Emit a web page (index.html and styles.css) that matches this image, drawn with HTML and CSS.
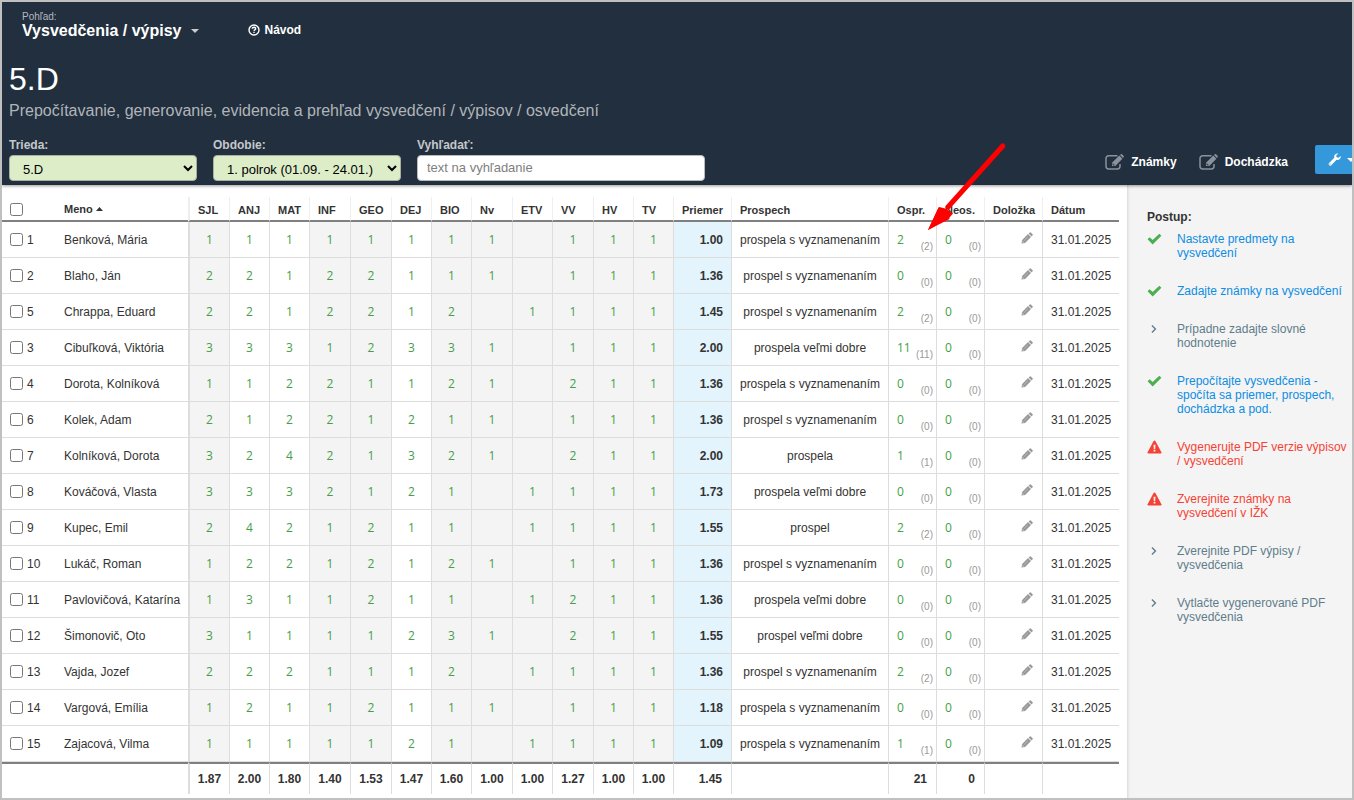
FILE: index.html
```html
<!DOCTYPE html>
<html lang="sk">
<head>
<meta charset="utf-8">
<title>Vysvedčenia / výpisy – 5.D</title>
<link rel="stylesheet" href="styles.css">
</head>
<body>
<svg class="sprite" aria-hidden="true">
  <symbol id="i-edit" viewBox="0 0 19 16">
    <path d="M12.500 1.700H3.700A2.700 2.700 0 0 0 1 4.400v7.900A2.700 2.700 0 0 0 3.700 15h8.600a2.700 2.700 0 0 0 2.700-2.700V10" fill="none" stroke="currentColor" stroke-width="1.500"/>
    <path d="M14.300 1.600l3.100 3.100-7.100 7.300H7V8.800zM15 .9l.9-.7q.6-.3 1.100.1l1.700 1.700q.4.500 0 1.100l-.7.900z" fill="currentColor"/>
    <path d="M8 9.400v1.600h1.600" fill="none" stroke="#222f3e" stroke-width=".8"/>
  </symbol>
  <symbol id="i-pencil" viewBox="0 0 12 12">
    <path d="M.5 11.500L1.100 7.900 7 2l3 3-5.900 5.900zM7.600 1.400L8.800.4q.5-.4 1 0L11.600 2.200q.5.500 0 1L10.600 4.400z" fill="currentColor"/>
    <path d="M1.500 9.400l1.100 1.100" stroke="#fff" stroke-width=".7"/>
    <path d="M3.200 8.400l3.600-3.600" stroke="#fff" stroke-width=".3"/>
  </symbol>
  <symbol id="i-check" viewBox="0 0 13 10">
    <path d="M.5 5.200L2.300 3.400 4.900 5.900 10.700.4 12.500 2.200 4.900 9.700z" fill="currentColor"/>
  </symbol>
  <symbol id="i-next" viewBox="0 0 13 10">
    <path d="M4.300 2L7.300 5 4.300 8" fill="none" stroke="currentColor" stroke-width="1.200"/>
  </symbol>
  <symbol id="i-warn" viewBox="0 0 15 13">
    <path d="M7.500 0q.6 0 .9.500l6 11.200q.4 1.200-.9 1.300h-12Q.2 12.900.6 11.700l6-11.200Q6.900 0 7.500 0z" fill="currentColor"/>
    <path d="M6.500 4.200h2l-.3 4.200H6.800zM6.600 9.300h1.800v1.800H6.600z" fill="#f4f4f4"/>
  </symbol>
</svg>
<div class="page">
  <header class="header">
    <nav class="topbar">
      <button class="view" type="button">
        <span class="view-label">Pohľad:</span>
        <span class="view-name">Vysvedčenia / výpisy <svg class="caret" viewBox="0 0 8 4"><path d="M0 0h8L4 4z" fill="currentColor"/></svg></span>
      </button>
      <a class="help" href="#"><svg viewBox="0 0 12 12"><circle cx="6" cy="6" r="5" fill="none" stroke="currentColor" stroke-width="1.400"/><path d="M4.200 4.700q.1-1.400 1.800-1.400 1.700.1 1.700 1.400 0 .8-.9 1.200-.7.300-.8 1" fill="none" stroke="currentColor" stroke-width="1.400"/><path d="M5.300 7.700h1.400V9H5.300z" fill="currentColor"/></svg>Návod</a>
    </nav>
    <h1 class="title">5.D</h1>
    <p class="subtitle">Prepočítavanie, generovanie, evidencia a prehľad vysvedčení / výpisov / osvedčení</p>
    <div class="toolbar">
      <div class="field field-select">
        <label for="trieda">Trieda:</label>
        <select id="trieda"><option>5.D</option></select>
      </div>
      <div class="field field-select">
        <label for="obdobie">Obdobie:</label>
        <select id="obdobie"><option>1. polrok (01.09. - 24.01.)</option></select>
      </div>
      <div class="field field-search">
        <label for="hladat">Vyhľadať:</label>
        <input id="hladat" type="text" placeholder="text na vyhľadanie">
      </div>
      <div class="actions">
        <a href="#"><svg><use href="#i-edit"/></svg>Známky</a>
        <a href="#"><svg><use href="#i-edit"/></svg>Dochádzka</a>
        <button class="tools" type="button" aria-label="Nástroje">
          <svg class="wrench" viewBox="0 0 13 13"><path d="M12.700 3.100q.3 1.700-.9 2.900-1.400 1.300-3.200.8L3.300 12.200q-1.100 1-2.200.1-1-1.100 0-2.200L6.300 4.800Q5.800 2.900 7.100 1.500 8.500.1 10.400.5L8.300 2.300l.2 2 2 .5zM2.200 10.500a.6.600 0 1 0 .1 1.100.6.600 0 0 0-.1-1.100z" fill="currentColor" fill-rule="evenodd"/></svg>
          <svg class="caret" viewBox="0 0 8 4"><path d="M0 0h8L4 4z" fill="currentColor"/></svg>
        </button>
      </div>
    </div>
  </header>
  <div class="body">
    <main class="content">
      <table class="grades">
        <colgroup>
          <col class="c-check"><col class="c-name"><col class="c-wide"><col span="2" class="c-grade"><col span="2" class="c-wide"><col span="2" class="c-grade"><col class="c-wide"><col class="c-grade"><col class="c-wide"><col span="2" class="c-grade"><col class="c-avg"><col class="c-result"><col span="2" class="c-abs"><col class="c-note"><col class="c-date">
        </colgroup>
        <thead>
          <tr>
            <th class="check"><input type="checkbox" aria-label="Vybrať všetko"></th>
            <th class="name">Meno <svg class="sort" viewBox="0 0 7 4"><path d="M0 4h7L3.500 0z" fill="currentColor"/></svg></th>
            <th class="first">SJL</th><th>ANJ</th><th>MAT</th><th>INF</th><th>GEO</th><th>DEJ</th><th>BIO</th><th>Nv</th><th>ETV</th><th>VV</th><th>HV</th><th>TV</th>
            <th>Priemer</th><th>Prospech</th><th>Ospr.</th><th>Neos.</th><th>Doložka</th><th>Dátum</th>
          </tr>
        </thead>
        <tbody id="rows"></tbody>
        <tfoot>
          <tr>
            <td class="check"></td><td class="name"></td>
            <td class="first">1.87</td><td>2.00</td><td>1.80</td><td>1.40</td><td>1.53</td><td>1.47</td><td>1.60</td><td>1.00</td><td>1.00</td><td>1.27</td><td>1.00</td><td>1.00</td>
            <td class="right">1.45</td><td></td><td class="right">21</td><td class="right">0</td><td></td><td></td>
          </tr>
        </tfoot>
      </table>
    </main>
    <aside class="steps">
      <h2>Postup:</h2>
      <ul>
        <li class="done"><svg><use href="#i-check"/></svg><a href="#">Nastavte predmety na vysvedčení</a></li>
        <li class="done"><svg><use href="#i-check"/></svg><a href="#">Zadajte známky na vysvedčení</a></li>
        <li><svg><use href="#i-next"/></svg><a href="#">Prípadne zadajte slovné hodnotenie</a></li>
        <li class="done"><svg><use href="#i-check"/></svg><a href="#">Prepočítajte vysvedčenia - spočíta sa priemer, prospech, dochádzka a pod.</a></li>
        <li class="warn"><svg><use href="#i-warn"/></svg><a href="#">Vygenerujte PDF verzie výpisov / vysvedčení</a></li>
        <li class="warn"><svg><use href="#i-warn"/></svg><a href="#">Zverejnite známky na vysvedčení v IŽK</a></li>
        <li><svg><use href="#i-next"/></svg><a href="#">Zverejnite PDF výpisy / vysvedčenia</a></li>
        <li><svg><use href="#i-next"/></svg><a href="#">Vytlačte vygenerované PDF vysvedčenia</a></li>
      </ul>
    </aside>
  </div>
  <svg class="pointer" viewBox="0 0 80 90" aria-hidden="true">
    <path d="M76.700 5L22 66" stroke="#f00" stroke-width="5" stroke-linecap="round"/>
    <path d="M2 89L13 66l6.500 1.500L27 72.500l-3.500 4z" fill="#f00"/>
    <path d="M2 89L12.500 66.500l5 1.500 5.500 7 .500 3z" fill="#f00"/>
  </svg>
</div>
<script src="rows.js"></script>
</body>
</html>
```
FILE: styles.css
```css
* { box-sizing: border-box; }
body {
  margin: 0;
  font: 12px/14px "Liberation Sans", Arial, sans-serif;
  color: #333;
}
a { color: inherit; text-decoration: none; }
button { font: inherit; color: inherit; background: none; border: 0; padding: 0; text-align: left; }
.sprite { display: none; }

.page {
  position: relative;
  display: flex;
  flex-direction: column;
  min-height: 100vh;
  border: 2px solid #c0c0c0;
  overflow: hidden;
}

.header {
  position: relative;
  background: #222f3e;
  color: #fff;
  padding: 10px 0 4px 7px;
  box-shadow: 0 1px 3px rgba(0, 0, 0, .4);
}
.topbar { display: flex; align-items: flex-end; gap: 49px; padding-left: 13px; }
.view-label { display: block; font-size: 10px; line-height: 10px; color: #b4b9bf; }
.view-name { display: flex; align-items: center; gap: 9px; font-size: 16px; line-height: 18px; font-weight: bold; }
.caret { width: 8px; height: 4px; color: #c8ccd0; }
.help { display: flex; align-items: center; gap: 5px; font-weight: bold; line-height: 20px; }
.help svg { width: 12px; height: 12px; }
.title { margin: 21px 0 0; font-size: 32px; line-height: 36px; font-weight: normal; }
.subtitle { margin: 4px 0 0; font-size: 16px; line-height: 20px; color: #b0b5ba; }

.toolbar { display: flex; align-items: flex-end; gap: 16px; margin-top: 17px; }
.field { display: flex; flex-direction: column; gap: 3px; }
.field label { font-weight: bold; color: #c4c8cc; }
.field-select { flex: 0 1 188px; }
.field-search { flex: 0 1 288px; }
.field select, .field input {
  width: 100%;
  height: 26px;
  border: 1px solid #a9b0a2;
  border-radius: 4px;
  font: 13px "Liberation Sans", Arial, sans-serif;
}
.field select { background: #dcedc8; color: #000; padding: 5px 0 3px 9px; }
.field input { background: #fff; border-color: #bbb; padding: 0 9px 2px; }
.field input::placeholder { color: #808080; }
.actions { display: flex; align-items: center; gap: 22px; margin: 0 -13px 7px auto; font-weight: bold; }
.actions a { display: flex; align-items: center; gap: 7px; padding-top: 4px; white-space: nowrap; }
.actions a svg { width: 19px; height: 16px; color: #8b929b; }
.tools {
  display: flex;
  align-items: center;
  gap: 6px;
  width: 50px;
  height: 29px;
  margin-left: 5px;
  padding-left: 13px;
  border-radius: 2px;
  background: #3498db;
  color: #fff;
}
.tools .wrench { width: 13px; height: 13px; flex: none; }
.tools .caret { color: #fff; flex: none; }

.body { display: flex; flex: 1; }
.content { flex: 1; padding: 12px 8px 4px 0; }

.grades { width: 100%; table-layout: fixed; border-collapse: separate; border-spacing: 0; }
.c-check { width: 54px; }
.c-name { width: 132px; }
.c-grade { width: 40px; }
.c-wide { width: 41px; }
.c-avg { width: 58px; }
.c-result { width: 157px; }
.c-abs { width: 48px; }
.c-note { width: 58px; }
.c-date { width: 77px; }
.grades th, .grades td { border-left: 1px solid #ddd; padding: 0 8px; white-space: nowrap; }
.grades .check, .grades .name { border-left: 0; }
.grades .first { border-left-width: 2px; }
.grades th {
  height: 25px;
  padding-top: 2px;
  border-left-color: #eee;
  border-bottom: 2px solid #808080;
  font-size: 11px;
  text-align: left;
}
.grades th.name, .grades th.check { padding-top: 0; }
.grades tbody td { height: 36px; border-bottom: 1px solid #ddd; }
.grades tfoot td { height: 32px; border-top: 2px solid #808080; font-weight: bold; text-align: center; padding: 0; }
.grades tfoot .right { padding-right: 9px; text-align: right; }
.grades td.grade { text-align: center; padding: 0; color: #43a047; font-family: "Open Sans", sans-serif; font-weight: 500; }
.grades .shade { background: #f4f4f4; }
.grades .avg { background: #e3f4fd; font-weight: bold; text-align: right; }
.grades .result { text-align: center; padding: 0; }
.grades .abs { padding: 8px 3px 0 8px; }
.grades .note { text-align: right; padding-right: 9px; }
.grades .note svg { width: 12px; height: 12px; color: #999; }
.grades input { margin: 0; width: 13px; height: 13px; vertical-align: middle; }
.pick { display: flex; align-items: center; gap: 4px; }
.sort { width: 7px; height: 4px; vertical-align: 2px; }
.absence { display: flex; justify-content: space-between; color: #43a047; font-family: "Open Sans", sans-serif; font-weight: 500; }
.absence small { padding-top: 7px; font: 10px/14px "Liberation Sans", Arial, sans-serif; color: #999; }

.steps { flex: 0 0 226px; padding: 25px 4px 20px 20px; background: #f4f4f4; box-shadow: inset 3px 0 3px -2px rgba(0, 0, 0, .12); }
.steps h2 { margin: 0 0 8px; font-size: 12px; line-height: 14px; }
.steps ul { display: flex; flex-direction: column; gap: 24px; margin: 0; padding: 0; list-style: none; }
.steps li { display: flex; gap: 15px; color: #607d8b; }
.steps li svg { flex: none; width: 15px; height: 14px; }
.steps .done svg { color: #4caf50; }
.steps .done a { color: #0d8de3; }
.steps .warn { color: #f44336; }

.pointer { position: absolute; left: 924px; top: 139px; width: 80px; height: 90px; }
```
FILE: rows.js
```js
// number, name, twelve grades ("-" = none), average, result, excused hours
const pupils = [
  [1, "Benková, Mária", "11111111-111", "1.00", "prospela s vyznamenaním", 2],
  [2, "Blaho, Ján", "22122111-111", "1.36", "prospel s vyznamenaním", 0],
  [5, "Chrappa, Eduard", "2212212-1111", "1.45", "prospel s vyznamenaním", 2],
  [3, "Cibuľková, Viktória", "33312331-111", "2.00", "prospela veľmi dobre", 11],
  [4, "Dorota, Kolníková", "11221121-211", "1.36", "prospela s vyznamenaním", 0],
  [6, "Kolek, Adam", "21221211-111", "1.36", "prospel s vyznamenaním", 0],
  [7, "Kolníková, Dorota", "32421321-211", "2.00", "prospela", 1],
  [8, "Kováčová, Vlasta", "3332121-1111", "1.73", "prospela veľmi dobre", 0],
  [9, "Kupec, Emil", "2421211-1111", "1.55", "prospel", 2],
  [10, "Lukáč, Roman", "12212121-111", "1.36", "prospel s vyznamenaním", 0],
  [11, "Pavlovičová, Katarína", "1311211-1211", "1.36", "prospela veľmi dobre", 0],
  [12, "Šimonovič, Oto", "31111231-211", "1.55", "prospel veľmi dobre", 0],
  [13, "Vajda, Jozef", "2221112-1111", "1.36", "prospel s vyznamenaním", 2],
  [14, "Vargová, Emília", "12112111-111", "1.18", "prospela s vyznamenaním", 0],
  [15, "Zajacová, Vilma", "1111121-1111", "1.09", "prospela s vyznamenaním", 1]
];
const plainColumns = [1, 2, 5];

const absence = n => `<td class="abs"><div class="absence">${n}<small>(${n})</small></div></td>`;

document.getElementById("rows").innerHTML = pupils.map(([no, name, grades, avg, result, excused]) => `
  <tr>
    <td class="check"><label class="pick"><input type="checkbox">${no}</label></td>
    <td class="name">${name}</td>
    ${[...grades].map((g, i) => `<td class="grade${i === 0 ? " first" : ""}${plainColumns.includes(i) ? "" : " shade"}">${g === "-" ? "" : g}</td>`).join("")}
    <td class="avg">${avg}</td>
    <td class="result">${result}</td>
    ${absence(excused)}${absence(0)}
    <td class="note"><svg><use href="#i-pencil"/></svg></td>
    <td class="date">31.01.2025</td>
  </tr>`).join("");
```
